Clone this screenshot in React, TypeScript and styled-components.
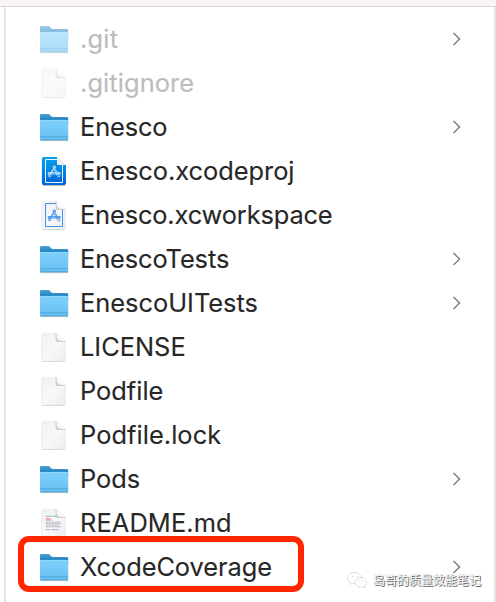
import React from "react";
import styled, { createGlobalStyle } from "styled-components";

const GlobalStyle = createGlobalStyle`
  * { box-sizing: border-box; }
  body { margin: 0; background: #fff; overflow: hidden; }
`;

const Window = styled.main`
  position: relative;
  display: flex;
  flex-direction: column;
  width: 496px;
  height: 602px;
  overflow: hidden;
  background: #fff;
  font-family: Inter, "Noto Sans", sans-serif;
`;

const TopBar = styled.div`
  flex: none;
  height: 7px;
  background: #faf3f3;
  border-bottom: 1px solid #d7d9d9;
`;

const Column = styled.ul`
  flex: 1;
  margin: 0 0 0 4px;
  padding: 10px 0 0;
  list-style: none;
  border-left: 2px solid #e4e4e4;
  border-right: 2px solid #e4e4e4;
`;

const Row = styled.li<{ $dim?: boolean }>`
  display: flex;
  align-items: center;
  height: 44px;
  padding: 0 32px 0 32px;
  color: ${(p) => (p.$dim ? "#bcbcbc" : "#272727")};
`;

const IconBox = styled.span<{ $dim?: boolean }>`
  display: flex;
  flex: none;
  width: 32px;
  height: 32px;
  margin-right: 10px;
  opacity: ${(p) => (p.$dim ? 0.55 : 1)};
`;

const Name = styled.span<{ $tracking: number }>`
  flex: 1;
  font-size: 25.4px;
  line-height: 32px;
  white-space: nowrap;
  letter-spacing: ${(p) => p.$tracking}px;
  -webkit-text-stroke: 0.12px currentColor;
`;

const Highlight = styled.div`
  position: absolute;
  left: 17.5px;
  top: 536px;
  width: 286px;
  height: 56px;
  border: 6px solid #ff2600;
  border-radius: 11px;
`;

const Watermark = styled.div`
  position: absolute;
  left: 346px;
  top: 570px;
  display: flex;
  align-items: center;
  gap: 5px;
  color: #fff;
  font: 12px/20px "Noto Sans CJK SC", sans-serif;
  text-shadow: 1px 1px 0 #666, 0 0 1px #888;
  white-space: nowrap;
`;

const Folder = () => (
  <svg width="32" height="32" viewBox="0 0 32 32">
    <defs>
      <linearGradient id="folderFront" x1="0" y1="0" x2="0" y2="1">
        <stop offset="0" stopColor="#80d1fb" />
        <stop offset="1" stopColor="#66bff3" />
      </linearGradient>
      <linearGradient id="folderBack" x1="0" y1="0" x2="0" y2="1">
        <stop offset="0" stopColor="#4ba2d8" />
        <stop offset=".6" stopColor="#1d7fc0" />
      </linearGradient>
    </defs>
    <path d="M2.4 29.5h27.6" stroke="#000" strokeOpacity=".22" strokeWidth="1.4" />
    <path d="M2 4.2Q2 3 3.4 3h7.1c1.7 0 2.3 2.9 4.2 2.9h14.1q1.4 0 1.4 1.4V14H2Z" fill="url(#folderBack)" />
    <path d="M2 10q0-1 1-1h26.2q1 0 1 1v18q0 1.2-1.2 1.2H3.2Q2 29.2 2 28Z" fill="url(#folderFront)" />
    <path d="M2.6 9.4h27" stroke="#98e0ff" strokeWidth=".7" />
    <path d="M2.2 25.8h27.8M2.4 28.8h27.4" stroke="#459fd0" strokeWidth=".8" />
  </svg>
);

const sheet = "M5.2 2h12.6l9.2 8.4v18q0 1.8-1.8 1.8H5.2q-1.8 0-1.8-1.8V3.8Q3.4 2 5.2 2Z";

const Sheet = ({ children }: { children?: React.ReactNode }) => (
  <svg width="32" height="32" viewBox="0 0 32 32">
    <defs>
      <linearGradient id="paper" x1="0" y1="0" x2="1" y2="1">
        <stop offset="0" stopColor="#f0f0f0" />
        <stop offset=".5" stopColor="#f8f8f8" />
        <stop offset="1" stopColor="#ededed" />
      </linearGradient>
      <linearGradient id="fold" x1="0" y1="1" x2="1" y2="0">
        <stop offset="0" stopColor="#c9c9c9" />
        <stop offset=".4" stopColor="#fff" />
        <stop offset="1" stopColor="#fff" />
      </linearGradient>
    </defs>
    <g transform="translate(.3 0)">
      <path d={sheet} transform="translate(0 .7)" fill="#c4c4c4" />
      <path d={sheet} fill="url(#paper)" stroke="#ececec" strokeWidth=".5" />
      {children}
      <path d="M17.8 2v7q0 1.4 1.4 1.4H27Z" fill="url(#fold)" />
      <path d="M17.8 2v7q0 1.4 1.4 1.4H27" fill="none" stroke="#bdbdbd" strokeWidth=".8" />
      <path d="m17.8 2 9.2 8.4" stroke="#e2e2e2" strokeWidth=".5" />
    </g>
  </svg>
);

const AppMark = ({ color }: { color: string }) => (
  <g fill="none" stroke={color} strokeLinecap="round" strokeLinejoin="round" strokeWidth=".85">
    <path d="M15.2 11.3q1-1 2 0l.3 1-.5 1.3 3.7 6.2M17.2 11.4l-1.6 2.8-3.8 6.2M15 11.8l.6 2.3 3.5 5.8M14.7 14.6l-3 4.8" />
    <path d="M10.3 17.7h11.6M10.3 19h11.6M10.3 17.7v1.3M21.9 17.7V19" />
    <path d="M10.5 20.7q0 1.4 1.3 1.3l1.2-1.2M21.9 20.7q0 1.4-1.3 1.3l-1.2-1.2" />
  </g>
);

const Project = () => (
  <svg width="32" height="32" viewBox="0 0 32 32">
    <defs>
      <linearGradient id="project" x1="0" y1="0" x2="0" y2="1">
        <stop offset="0" stopColor="#05a3ed" />
        <stop offset="1" stopColor="#0063d6" />
      </linearGradient>
    </defs>
    <path d="M5 30.3h22" stroke="#aaa" strokeWidth="1" />
    <path d="M5.6 2h13L28 10.4v17.9q0 1.7-1.7 1.7H5.6q-1.7 0-1.7-1.7V3.7Q3.9 2 5.6 2Z" fill="url(#project)" />
    <path d="M19.5 4.5h-12v23h17V10" fill="none" stroke="#fff" strokeWidth=".9" />
    <AppMark color="#d9efff" />
    <path d="M18.6 1.6H28.4V10h-.5Z" fill="#fff" />
    <path d="M19 2.2v6.6q0 1.3 1.3 1.3h7.5Z" fill="#ececec" />
  </svg>
);

const Workspace = () => (
  <Sheet>
    <path d="M18.5 4.5H7.2v23h17V10" fill="none" stroke="#2688eb" strokeWidth=".9" />
    <g transform="translate(-.3 0)">
      <AppMark color="#2584e8" />
    </g>
  </Sheet>
);

const Markdown = () => (
  <Sheet>
    <g fill="none" strokeWidth=".9" opacity=".85">
      <path d="M7.5 9.2h4" stroke="#7a93ab" />
      <path d="M11.5 9.2h8" stroke="#59c1b2" />
      <path d="M19.5 9.2h5" stroke="#92a8d2" />
      <path d="M7.5 11.7h4.5" stroke="#eb5ca1" />
      <path d="M7.5 13h6" stroke="#e3609f" />
      <path d="M7.5 15h15M7.5 16.6h15.5M7.5 18.2h13M7.5 19.8h15.5" stroke="#a5a5b8" strokeDasharray="3 .4 2 .3" />
      <path d="M7.5 22.7h4m1.3 0h7.2" stroke="#7b95dc" />
    </g>
  </Sheet>
);

const Chevron = () => (
  <svg width="10" height="16" viewBox="0 0 10 16">
    <path d="m1.5 2 6 6-6 6" fill="none" stroke="#838383" strokeWidth="1.5" />
  </svg>
);

const WeChat = () => (
  <svg width="22" height="18" viewBox="0 0 22 18" fill="#fff" stroke="#aaa" strokeWidth=".7" strokeDasharray="1.2 1.2">
    <path d="M8.5 1.5C4.7 1.5 1.5 4 1.5 7.1c0 1.8 1 3.2 2.5 4.2l-.6 2.1 2.5-1.2c.8.2 1.7.3 2.6.3 3.9 0 6.8-2.5 6.8-5.5s-3-5.5-6.8-5.5Z" />
    <path d="M14.8 6.5c-3.3 0-5.8 2.1-5.8 4.8s2.6 4.8 5.8 4.8q1 0 2-.3l2.1 1-.5-1.8c1.3-.9 2.1-2.2 2.1-3.7 0-2.7-2.5-4.8-5.7-4.8Z" />
    <path d="M6 5.4h.7m4 0h.7M12.6 10h.7m3.2 0h.7" stroke="#777" strokeDasharray="none" />
  </svg>
);

const icons = { folder: Folder, file: Sheet, project: Project, workspace: Workspace, markdown: Markdown };

type Item = { name: string; icon: keyof typeof icons; tracking?: number; dim?: boolean };

const items: Item[] = [
  { name: ".git", icon: "folder", dim: true, tracking: 0.2 },
  { name: ".gitignore", icon: "file", dim: true, tracking: 0.1 },
  { name: "Enesco", icon: "folder", tracking: -0.12 },
  { name: "Enesco.xcodeproj", icon: "project", tracking: -0.03 },
  { name: "Enesco.xcworkspace", icon: "workspace", tracking: -0.14 },
  { name: "EnescoTests", icon: "folder", tracking: -0.1 },
  { name: "EnescoUITests", icon: "folder" },
  { name: "LICENSE", icon: "file" },
  { name: "Podfile", icon: "file" },
  { name: "Podfile.lock", icon: "file", tracking: 0.06 },
  { name: "Pods", icon: "folder" },
  { name: "README.md", icon: "markdown", tracking: 0.1 },
  { name: "XcodeCoverage", icon: "folder", tracking: -0.06 },
];

export default function App() {
  return (
    <Window>
      <GlobalStyle />
      <TopBar />
      <Column>
        {items.map(({ name, icon, tracking = 0, dim }) => {
          const Icon = icons[icon];
          return (
            <Row key={name} $dim={dim}>
              <IconBox $dim={dim}><Icon /></IconBox>
              <Name $tracking={tracking}>{name}</Name>
              {icon === "folder" && <Chevron />}
            </Row>
          );
        })}
      </Column>
      <Highlight />
      <Watermark>
        <WeChat />
        岛哥的质量效能笔记
      </Watermark>
    </Window>
  );
}
